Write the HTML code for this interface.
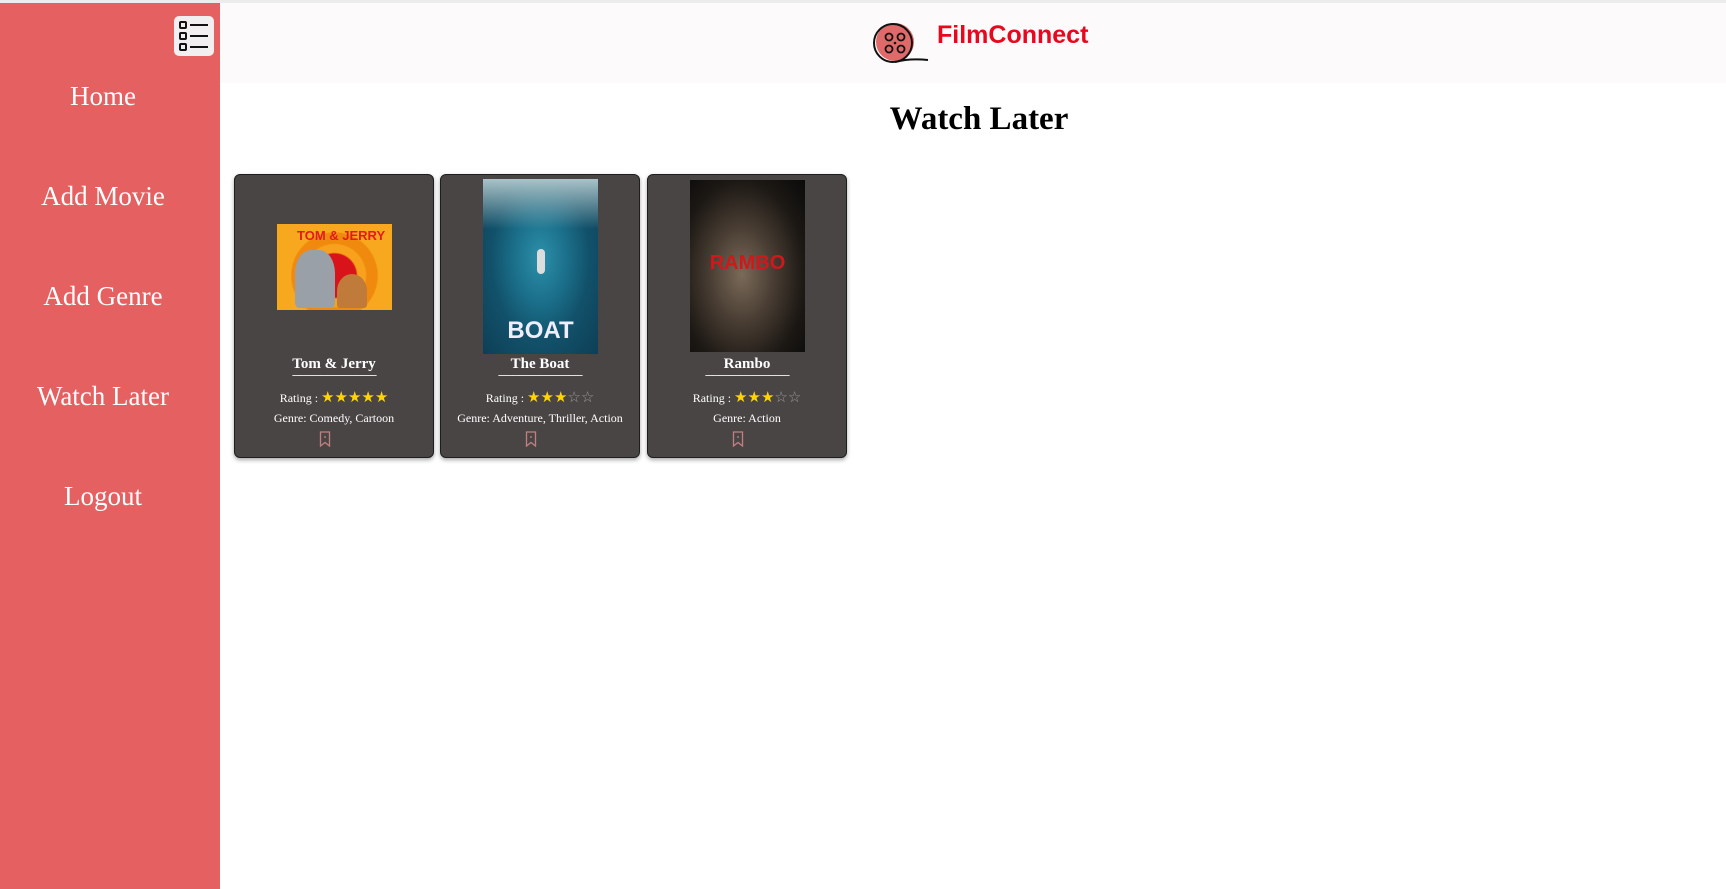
<!DOCTYPE html>
<html><head><meta charset="utf-8"><style>
*{margin:0;padding:0;box-sizing:border-box}
body{width:1726px;height:889px;overflow:hidden;background:#fff;font-family:"Liberation Serif",serif;position:relative}
.top{position:absolute;left:0;top:0;width:1726px;height:3px;background:#ececec}
.side{position:absolute;left:0;top:3px;width:220px;height:886px;background:#e56060}
.side a{position:absolute;left:0;width:206px;text-align:center;color:#fff;font-size:27px;text-decoration:none}
.tog{position:absolute;left:174px;top:13px;width:40px;height:40px;background:#f1efef;border-radius:5px}
.hdr{position:absolute;left:220px;top:3px;width:1506px;height:80px;background:#fcfafb}
.brand{position:absolute;left:937px;top:21px;font-family:"Liberation Sans",sans-serif;font-weight:bold;font-size:25px;color:#e8081e}
h1{position:absolute;left:220px;width:1518px;top:101px;text-align:center;font-size:33px;font-weight:bold;color:#000}
.card{position:absolute;top:174px;width:200px;height:284px;background:#4a4545;border:1px solid #1e1e1e;border-radius:6px;box-shadow:0 2px 4px rgba(0,0,0,.35);color:#fff;text-align:center}
.card .t{position:absolute;left:0;right:0;top:181px;font-weight:bold;font-size:15px}
.card .d{position:absolute;left:0;right:0;top:195px;font-size:10px;letter-spacing:-1px}
.card .r{position:absolute;left:0;right:0;top:213px;font-size:12px}
.card .r b{color:#ffd400;font-size:15px;font-weight:normal}
.card .r i{color:#999;font-size:15px;font-style:normal}
.card .g{position:absolute;left:0;right:0;top:236px;font-size:12px}
.card svg.bm{position:absolute;left:84px;top:256px}
.img{position:absolute}
</style></head><body>
<div class="top"></div>
<div class="side">
<div class="tog"><svg width="40" height="40" viewBox="0 0 40 40" fill="none" stroke="#111" stroke-width="2"><rect x="6" y="6" width="6" height="6" rx="1"/><rect x="6" y="17" width="6" height="6" rx="1"/><rect x="6" y="28" width="6" height="6" rx="1"/><path d="M16 9h18M16 20h18M16 31h18"/></svg></div>
<a style="top:78px">Home</a>
<a style="top:178px">Add Movie</a>
<a style="top:278px">Add Genre</a>
<a style="top:378px">Watch Later</a>
<a style="top:478px">Logout</a>
</div>
<div class="hdr"></div>
<svg style="position:absolute;left:870px;top:20px" width="66" height="46" viewBox="0 0 66 46"><circle cx="25" cy="22" r="19" fill="#e06a6a"/><circle cx="23" cy="23" r="19" fill="none" stroke="#111" stroke-width="2"/><path d="M25 42 Q40 38 58 40" fill="none" stroke="#111" stroke-width="2"/><g fill="none" stroke="#111" stroke-width="1.8"><circle cx="19" cy="17" r="3.5"/><circle cx="31" cy="17" r="3.5"/><circle cx="19" cy="29" r="3.5"/><circle cx="31" cy="29" r="3.5"/></g><circle cx="25" cy="23" r="1.3" fill="#111"/></svg>
<div class="brand">FilmConnect</div>
<h1>Watch Later</h1>

<div class="card" style="left:234px">
<div class="img" style="left:42px;top:49px;width:115px;height:86px;background:radial-gradient(circle at 50% 60%,#d8141a 0 28%,#f7a11c 30% 40%,#ef8a0e 42% 55%,#f8a81e 57%)"><div style="position:absolute;left:18px;top:26px;width:40px;height:58px;background:#9aa0a8;border-radius:40% 40% 10% 10%"></div><div style="position:absolute;left:60px;top:50px;width:30px;height:34px;background:#c07a3a;border-radius:50% 50% 10% 10%"></div><div style="position:absolute;left:20px;top:4px;font:bold 13px 'Liberation Sans',sans-serif;color:#e31b1b">TOM &amp; JERRY</div></div>
<div class="t">Tom &amp; Jerry</div>
<div class="d">------------------------------------</div>
<div class="r">Rating : <b>★★★★★</b></div>
<div class="g">Genre: Comedy, Cartoon</div>
<svg class="bm" width="12" height="16" viewBox="0 0 12 16" fill="none" stroke="#c08080" stroke-width="1.3"><path d="M1.5 1h9v14l-4.5-3.5-4.5 3.5z"/><path d="M6 5v2"/></svg>
</div>

<div class="card" style="left:440px">
<div class="img" style="left:42px;top:4px;width:115px;height:175px;background:radial-gradient(ellipse at 50% 45%,#2c90aa 0,#1a6d88 35%,#12516a 60%,#0d3f56 100%)"><div style="position:absolute;left:0;top:0;width:115px;height:50px;background:linear-gradient(#a9c3c8,rgba(60,130,150,0))"></div><div style="position:absolute;left:54px;top:70px;width:8px;height:25px;background:#ddd;border-radius:4px"></div><div style="position:absolute;left:0;right:0;top:138px;font:bold 24px 'Liberation Sans',sans-serif;color:#eef;text-align:center">BOAT</div></div>
<div class="t">The Boat</div>
<div class="d">------------------------------------</div>
<div class="r">Rating : <b>★★★</b><i>☆☆</i></div>
<div class="g">Genre: Adventure, Thriller, Action</div>
<svg class="bm" width="12" height="16" viewBox="0 0 12 16" fill="none" stroke="#c08080" stroke-width="1.3"><path d="M1.5 1h9v14l-4.5-3.5-4.5 3.5z"/><path d="M6 5v2"/></svg>
</div>

<div class="card" style="left:647px">
<div class="img" style="left:42px;top:5px;width:115px;height:172px;background:radial-gradient(ellipse at 45% 55%,#7a6a58 0,#4a3e34 35%,#1c1814 70%,#0a0a0a 100%)"><div style="position:absolute;left:0;right:0;top:72px;font:bold 20px 'Liberation Sans',sans-serif;color:#d0181c;text-align:center">RAMBO</div></div>
<div class="t">Rambo</div>
<div class="d">------------------------------------</div>
<div class="r">Rating : <b>★★★</b><i>☆☆</i></div>
<div class="g">Genre: Action</div>
<svg class="bm" width="12" height="16" viewBox="0 0 12 16" fill="none" stroke="#c08080" stroke-width="1.3"><path d="M1.5 1h9v14l-4.5-3.5-4.5 3.5z"/><path d="M6 5v2"/></svg>
</div>
</body></html>
